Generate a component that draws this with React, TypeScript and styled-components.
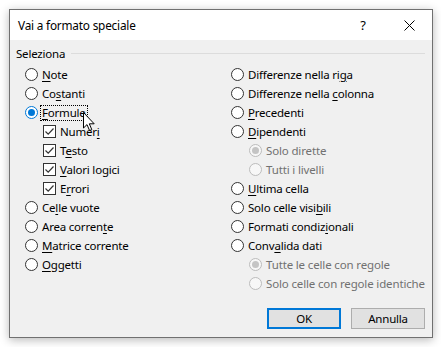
import React from 'react';
import styled, { createGlobalStyle, css } from 'styled-components';

const GlobalStyle = createGlobalStyle`
  html, body {
    margin: 0;
    padding: 0;
    background: #ffffff;
  }
  body {
    font-family: "Noto Sans", "Open Sans", sans-serif;
    font-size: 11.5px;
    letter-spacing: -0.2px;
    color: #000;
  }
`;

const Page = styled.div`
  width: 441px;
  height: 347px;
  padding: 9px 0 0 9px;
  box-sizing: border-box;
`;

const Window = styled.div`
  position: relative;
  width: 424px;
  height: 329px;
  box-sizing: border-box;
  border: 1px solid #707070;
  background: #f0f0f0;
  box-shadow: 0 2px 9px rgba(0, 0, 0, 0.28);
  display: flex;
  flex-direction: column;
`;

const TitleBar = styled.div`
  height: 30px;
  background: #fff;
  display: flex;
  align-items: center;
  padding-left: 8px;
`;

const Title = styled.div`
  flex: 1;
  font-size: 11.8px;
`;

const TitleButton = styled.div`
  width: 46px;
  height: 30px;
  display: flex;
  align-items: center;
  justify-content: center;
  font-size: 13px;
`;

const Body = styled.div`
  flex: 1;
  display: flex;
  flex-direction: column;
  padding: 5px 7px 8px 6px;
`;

const Legend = styled.div`
  display: flex;
  align-items: center;
  height: 16px;
  gap: 6px;
  &::after {
    content: "";
    flex: 1;
    height: 1px;
    background: #dcdcdc;
    margin-top: 1px;
  }
`;

const Columns = styled.div`
  display: grid;
  grid-template-columns: 206px 1fr;
  padding: 4px 0 0 9px;
`;

const Column = styled.div`
  display: flex;
  flex-direction: column;
`;

const Row = styled.div<{ $indent?: number; $disabled?: boolean }>`
  height: 19px;
  display: flex;
  align-items: center;
  gap: 4px;
  white-space: nowrap;
  padding-left: ${p => p.$indent || 0}px;
  color: ${p => (p.$disabled ? '#717171' : '#000')};
  letter-spacing: ${p => (p.$disabled ? '-0.15px' : '-0.2px')};
`;

const Radio = styled.span<{ $checked?: boolean; $disabled?: boolean }>`
  width: 13px;
  height: 13px;
  box-sizing: border-box;
  border-radius: 50%;
  border: 1px solid ${p => (p.$disabled ? '#bcbcbc' : p.$checked ? '#0078d7' : '#333')};
  background: ${p => (p.$disabled ? '#f7f7f7' : '#fff')};
  display: flex;
  align-items: center;
  justify-content: center;
  flex: none;
  ${p =>
    p.$checked &&
    css`
      &::after {
        content: "";
        width: 7px;
        height: 7px;
        border-radius: 50%;
        background: ${p.$disabled ? '#c4c4c4' : '#0078d7'};
      }
    `}
`;

const Check = styled.span`
  width: 13px;
  height: 13px;
  box-sizing: border-box;
  border: 1px solid #333;
  background: #fff;
  display: flex;
  align-items: center;
  justify-content: center;
  flex: none;
`;

const Label = styled.span<{ $focus?: boolean }>`
  line-height: 14px;
  padding: 0 1px;
  margin-left: -1px;
  ${p => p.$focus && css`outline: 1px dotted #000;`}
`;

const Key = styled.span`
  text-decoration: underline;
  text-underline-offset: 2px;
`;

const Footer = styled.div`
  margin-top: auto;
  display: flex;
  justify-content: flex-end;
  gap: 10px;
`;

const Button = styled.div<{ $default?: boolean }>`
  width: 74px;
  height: 21px;
  box-sizing: border-box;
  background: #e1e1e1;
  border: ${p => (p.$default ? '2px solid #0078d7' : '1px solid #adadad')};
  display: flex;
  align-items: center;
  justify-content: center;
`;

const Cursor = styled.svg`
  position: absolute;
  left: 73px;
  top: 102px;
`;

type Item = {
  text: string;
  key?: number;
  kind: 'radio' | 'check';
  checked?: boolean;
  disabled?: boolean;
  indent?: number;
  focus?: boolean;
};

const left: Item[] = [
  { text: 'Note', key: 0, kind: 'radio' },
  { text: 'Costanti', key: 2, kind: 'radio' },
  { text: 'Formule', key: 0, kind: 'radio', checked: true, focus: true },
  { text: 'Numeri', key: 5, kind: 'check', checked: true, indent: 18 },
  { text: 'Testo', key: 1, kind: 'check', checked: true, indent: 18 },
  { text: 'Valori logici', key: 0, kind: 'check', checked: true, indent: 18 },
  { text: 'Errori', key: 1, kind: 'check', checked: true, indent: 18 },
  { text: 'Celle vuote', key: 2, kind: 'radio' },
  { text: 'Area corrente', key: 11, kind: 'radio' },
  { text: 'Matrice corrente', key: 0, kind: 'radio' },
  { text: 'Oggetti', key: 0, kind: 'radio' },
];

const right: Item[] = [
  { text: 'Differenze nella riga', key: 19, kind: 'radio' },
  { text: 'Differenze nella colonna', key: 17, kind: 'radio' },
  { text: 'Precedenti', key: 0, kind: 'radio' },
  { text: 'Dipendenti', key: 0, kind: 'radio' },
  { text: 'Solo dirette', kind: 'radio', checked: true, disabled: true, indent: 18 },
  { text: 'Tutti i livelli', kind: 'radio', disabled: true, indent: 18 },
  { text: 'Ultima cella', key: 0, kind: 'radio' },
  { text: 'Solo celle visibili', key: 15, kind: 'radio' },
  { text: 'Formati condizionali', key: 14, kind: 'radio' },
  { text: 'Convalida dati', key: 4, kind: 'radio' },
  { text: 'Tutte le celle con regole', kind: 'radio', checked: true, disabled: true, indent: 18 },
  { text: 'Solo celle con regole identiche', kind: 'radio', disabled: true, indent: 18 },
];

const renderText = (text: string, key?: number) => {
  if (key === undefined) return text;
  return (
    <>
      {text.slice(0, key)}
      <Key>{text[key]}</Key>
      {text.slice(key + 1)}
    </>
  );
};

const CheckMark = () => (
  <svg width="11" height="11" viewBox="0 0 11 11">
    <path d="M1.5 5.5 L4.2 8.2 L9.5 2.5" fill="none" stroke="#333" strokeWidth="1.2" />
  </svg>
);

const Option = ({ item }: { item: Item }) => (
  <Row $indent={item.indent} $disabled={item.disabled}>
    {item.kind === 'radio' ? (
      <Radio $checked={item.checked} $disabled={item.disabled} />
    ) : (
      <Check>{item.checked && <CheckMark />}</Check>
    )}
    <Label $focus={item.focus}>{renderText(item.text, item.key)}</Label>
  </Row>
);

const App = () => (
  <Page>
    <GlobalStyle />
    <Window>
      <TitleBar>
        <Title>Vai a formato speciale</Title>
        <TitleButton>?</TitleButton>
        <TitleButton>
          <svg width="11" height="11" viewBox="0 0 11 11">
            <path d="M0.5 0.5 L10.5 10.5 M10.5 0.5 L0.5 10.5" stroke="#000" strokeWidth="1" />
          </svg>
        </TitleButton>
      </TitleBar>
      <Body>
        <Legend>Seleziona</Legend>
        <Columns>
          <Column>
            {left.map(i => (
              <Option key={i.text} item={i} />
            ))}
          </Column>
          <Column>
            {right.map(i => (
              <Option key={i.text} item={i} />
            ))}
          </Column>
        </Columns>
        <Footer>
          <Button $default>OK</Button>
          <Button>Annulla</Button>
        </Footer>
      </Body>
      <Cursor width="13" height="20" viewBox="0 0 13 20">
        <path
          d="M0.5 0.5 L0.5 16 L4 12.6 L6.6 18.6 L8.8 17.6 L6.3 11.8 L11.2 11.8 Z"
          fill="#fff"
          stroke="#000"
          strokeWidth="1"
          strokeLinejoin="round"
        />
      </Cursor>
    </Window>
  </Page>
);

export default App;
